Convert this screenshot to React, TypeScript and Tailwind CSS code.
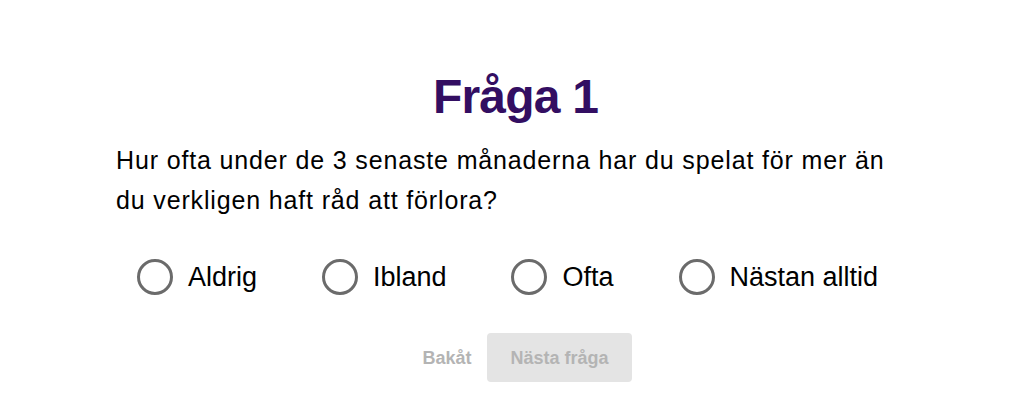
import React from "react";

const options = ["Aldrig", "Ibland", "Ofta", "Nästan alltid"];

export default function App() {
  return (
    <div
      className="w-[1024px] h-[420px] bg-white overflow-hidden"
      style={{ fontFamily: '"Liberation Sans", Arial, sans-serif' }}
    >
      <div className="mx-auto w-[792px] pt-[69px]">
        <h1 className="pl-[7px] text-center text-[48px] leading-[56px] font-bold tracking-[-0.8px] text-[#330e62]">
          Fråga 1
        </h1>
        <p className="mt-[15px] text-[25px] leading-[40px] tracking-[0.85px] text-black">
          Hur ofta under de 3 senaste månaderna har du spelat för mer än du verkligen haft råd att förlora?
        </p>
        <div className="mt-[39px] flex items-center justify-center gap-[65px] pr-[9px]">
          {options.map((o) => (
            <label key={o} className="flex items-center gap-[15px] cursor-pointer">
              <span className="block w-[36px] h-[36px] rounded-full border-[3px] border-[#6b6b6b]" />
              <span className="text-[27px] leading-[36px] text-black">{o}</span>
            </label>
          ))}
        </div>
        <div className="mt-[38px] flex items-center justify-center gap-[16px] pl-[30px]">
          <button className="text-[18px] leading-[24px] font-bold text-[#b4b4b4]">Bakåt</button>
          <button className="h-[49px] px-[23px] rounded-[4px] bg-[#e4e4e4] text-[18px] leading-[24px] font-bold text-[#b4b4b4]">
            Nästa fråga
          </button>
        </div>
      </div>
    </div>
  );
}
